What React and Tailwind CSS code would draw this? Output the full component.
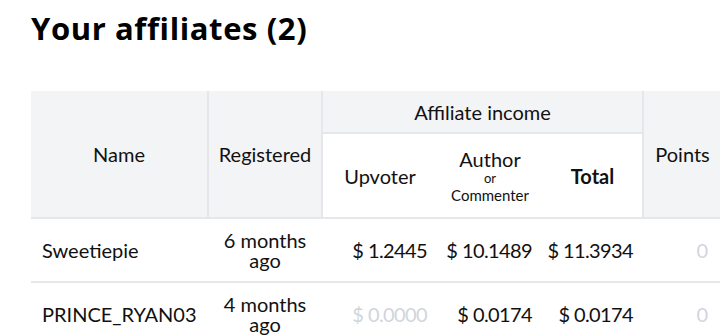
export default function App() {
  const rows = [
    { name: 'Sweetiepie', reg: '6 months ago', up: '$ 1.2445', upMuted: false, author: '$ 10.1489', total: '$ 11.3934', points: '0' },
    { name: 'PRINCE_RYAN03', reg: '4 months ago', up: '$ 0.0000', upMuted: true, author: '$ 0.0174', total: '$ 0.0174', points: '0' },
  ];

  return (
    <div className="w-[720px] h-[336px] overflow-hidden bg-white text-[#111] font-['Lato',sans-serif]">
      <div className="pl-[31px]">
        <h1 className="pt-[9px] text-[31px] leading-[38px] font-bold tracking-[0.6px] text-black font-['Open_Sans',sans-serif]">
          Your affiliates (2)
        </h1>

        <table className="mt-[44px] w-[690px] table-fixed border-collapse text-[20px] leading-[20px]">
          <colgroup>
            <col className="w-[177px]" />
            <col className="w-[114px]" />
            <col className="w-[115px]" />
            <col className="w-[106px]" />
            <col className="w-[100px]" />
            <col className="w-[78px]" />
          </colgroup>
          <thead>
            <tr className="h-[42px]">
              <th rowSpan={2} className="bg-gray-100 border-r-2 border-b-2 border-gray-200 font-normal text-center">Name</th>
              <th rowSpan={2} className="bg-gray-100 border-r-2 border-b-2 border-gray-200 font-normal text-center">Registered</th>
              <th colSpan={3} className="bg-gray-100 border-b-2 border-gray-200 font-normal text-center">Affiliate income</th>
              <th rowSpan={2} className="bg-gray-100 border-l-2 border-b-2 border-gray-200 font-normal text-center">Points</th>
            </tr>
            <tr className="h-[85px]">
              <th className="bg-white border-b-2 border-gray-200 font-normal text-center">Upvoter</th>
              <th className="bg-white border-b-2 border-gray-200 font-normal text-center">
                <div className="pt-[3px]">Author</div>
                <div className="text-[13px] leading-[16px] mt-[1px]">or</div>
                <div className="text-[15px] leading-[19px]">Commenter</div>
              </th>
              <th className="bg-white border-b-2 border-gray-200 font-bold text-center">Total</th>
            </tr>
          </thead>
          <tbody>
            {rows.map((r) => (
              <tr key={r.name} className="h-[64px] border-b-2 border-gray-200">
                <td className="pl-[11px] text-left whitespace-nowrap">{r.name}</td>
                <td className="px-[12px] text-center">{r.reg}</td>
                <td className={'pr-[10px] text-right whitespace-nowrap tracking-[-0.6px] ' + (r.upMuted ? 'text-gray-300' : '')}>{r.up}</td>
                <td className="pr-[11px] text-right whitespace-nowrap tracking-[-0.6px]">{r.author}</td>
                <td className="pr-[10px] text-right whitespace-nowrap tracking-[-0.6px]">{r.total}</td>
                <td className="pr-[13px] text-right text-gray-300">{r.points}</td>
              </tr>
            ))}
          </tbody>
        </table>
      </div>
    </div>
  );
}
